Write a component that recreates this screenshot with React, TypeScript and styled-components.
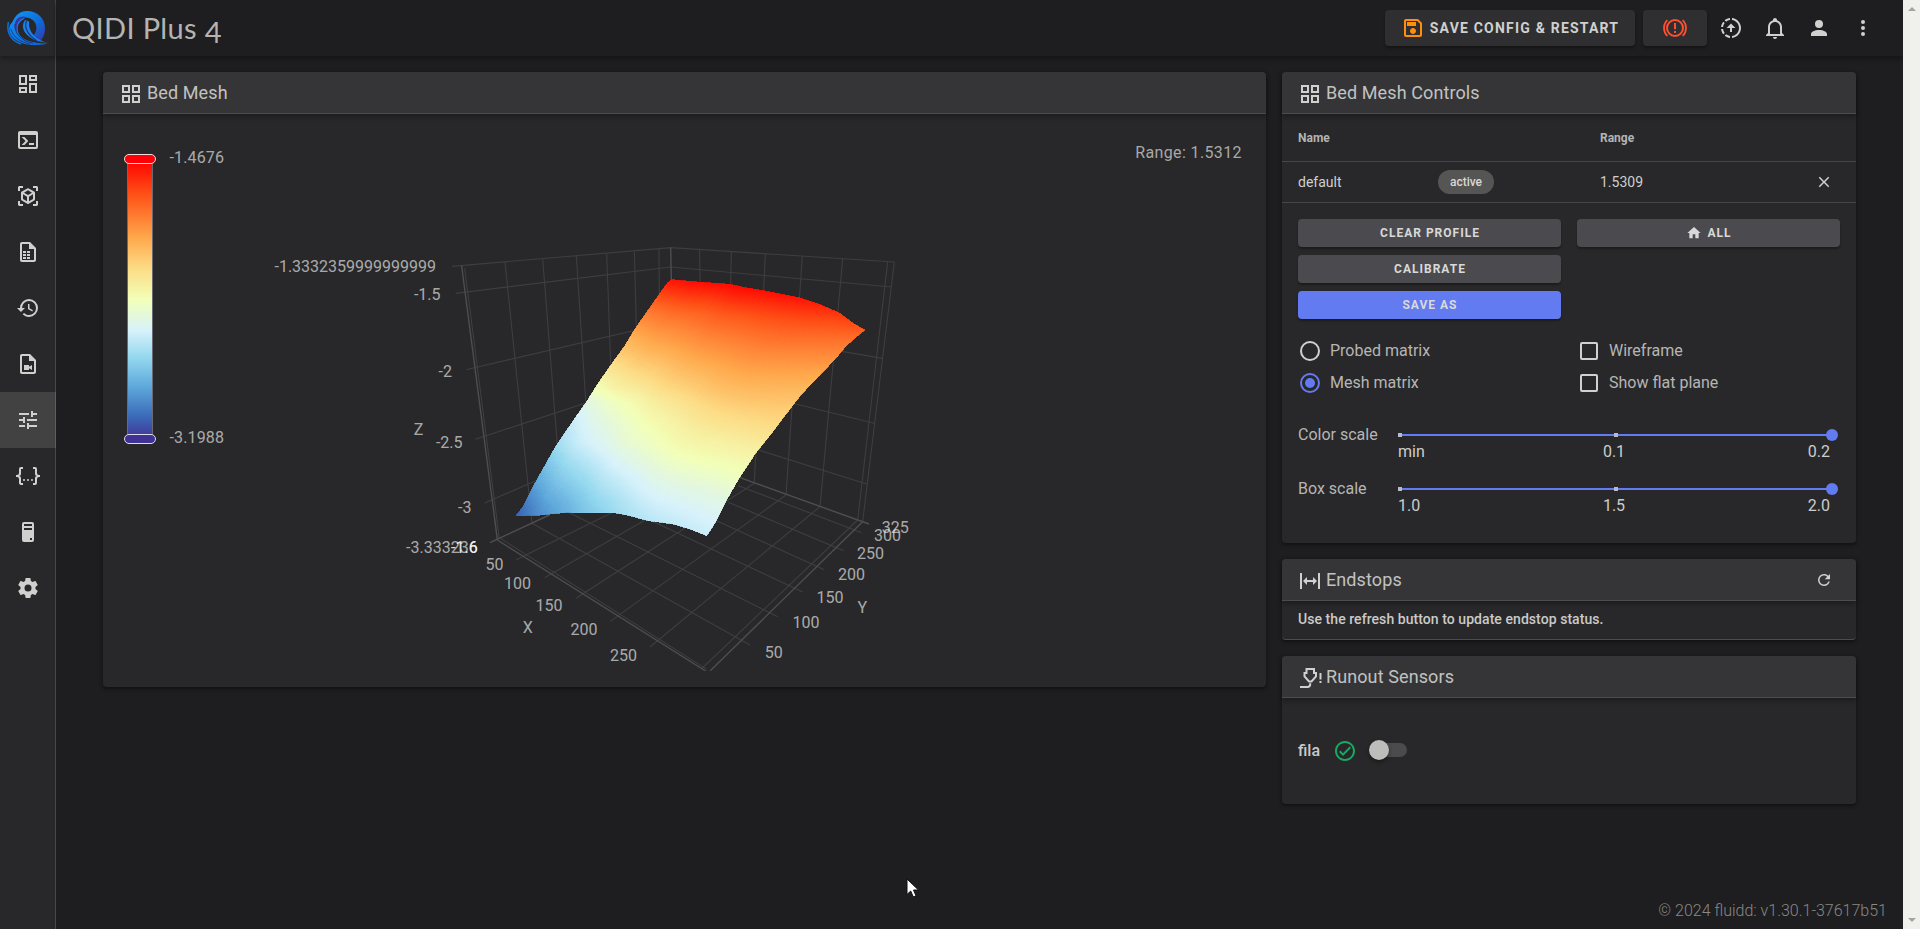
import React from "react";
import styled, { createGlobalStyle } from "styled-components";

const GlobalStyle = createGlobalStyle`
  * { box-sizing: border-box; }
  html, body { margin: 0; height: 100%; overflow: hidden; background: #1e1e20; }
  body { font-family: Roboto, "Liberation Sans", sans-serif; font-size: 16px; color: #c8c8c6; }
  button { font-family: inherit; border: 0; padding: 0; cursor: pointer; }
`;

/* ---------- icons ---------- */
const icons = {
  dashboard:
    "M19,5V7H15V5H19M9,5V11H5V5H9M19,13V19H15V13H19M9,17V19H5V17H9M21,3H13V9H21V3M11,3H3V13H11V3M21,11H13V21H21V11M11,15H3V21H11V15Z",
  console:
    "M20,19V7H4V19H20M20,3A2,2 0 0,1 22,5V19A2,2 0 0,1 20,21H4A2,2 0 0,1 2,19V5C2,3.89 2.9,3 4,3H20M13,17V15H18V17H13M9.58,13L5.57,9H8.4L11.7,12.3C12.09,12.69 12.09,13.33 11.7,13.72L8.42,17H5.59L9.58,13Z",
  cubeScan:
    "M17,22V20H20V17H22V20.5C22,20.89 21.84,21.24 21.54,21.54C21.24,21.84 20.89,22 20.5,22H17M7,22H3.5C3.11,22 2.76,21.84 2.46,21.54C2.16,21.24 2,20.89 2,20.5V17H4V20H7V22M17,2H20.5C20.89,2 21.24,2.16 21.54,2.46C21.84,2.76 22,3.11 22,3.5V7H20V4H17V2M7,2V4H4V7H2V3.5C2,3.11 2.16,2.76 2.46,2.46C2.76,2.16 3.11,2 3.5,2H7M13,17.25L17,14.95V10.36L13,12.66V17.25M12,10.92L16,8.63L12,6.28L8,8.63L12,10.92M7,14.95L11,17.25V12.66L7,10.36V14.95M18.23,7.59C18.73,7.91 19,8.34 19,8.91V15.23C19,15.8 18.73,16.23 18.23,16.55L12.75,19.73C12.25,20.05 11.75,20.05 11.25,19.73L5.77,16.55C5.27,16.23 5,15.8 5,15.23V8.91C5,8.34 5.27,7.91 5.77,7.59L11.25,4.41C11.5,4.28 11.75,4.22 12,4.22C12.25,4.22 12.5,4.28 12.75,4.41L18.23,7.59Z",
  fileTable:
    "M14 2H6C4.89 2 4 2.9 4 4V20C4 21.11 4.89 22 6 22H18C19.11 22 20 21.11 20 20V8L14 2M18 20H6V4H13V9H18V20M7 11H10V13H7V11M11 11H14V13H11V11M7 14H10V16H7V14M11 14H14V16H11V14M7 17H10V19H7V17M11 17H14V19H11V17Z",
  history:
    "M13.5,8H12V13L16.28,15.54L17,14.33L13.5,12.25V8M13,3A9,9 0 0,0 4,12H1L4.96,16.03L9,12H6A7,7 0 0,1 13,5A7,7 0 0,1 20,12A7,7 0 0,1 13,19C11.07,19 9.32,18.21 8.06,16.94L6.64,18.36C8.27,20 10.5,21 13,21A9,9 0 0,0 22,12A9,9 0 0,0 13,3",
  fileVideo:
    "M14 2H6C4.89 2 4 2.9 4 4V20C4 21.11 4.89 22 6 22H18C19.11 22 20 21.11 20 20V8L14 2M18 20H6V4H13V9H18V20M8 13H13V14.7L16 13V18L13 16.3V18H8V13Z",
  tune:
    "M3,17V19H9V17H3M3,5V7H13V5H3M13,21V19H21V17H13V15H11V21H13M7,9V11H3V13H7V15H9V9H7M21,13V11H11V13H21M15,9H17V7H21V5H17V3H15V9Z",
  json:
    "M5,3H7V5H5V10A2,2 0 0,1 3,12A2,2 0 0,1 5,14V19H7V21H5C3.93,20.73 3,20.1 3,19V15A2,2 0 0,0 1,13H0V11H1A2,2 0 0,0 3,9V5A2,2 0 0,1 5,3M19,3A2,2 0 0,1 21,5V9A2,2 0 0,0 23,11H24V13H23A2,2 0 0,0 21,15V19A2,2 0 0,1 19,21H17V19H19V14A2,2 0 0,1 21,12A2,2 0 0,1 19,10V5H17V3H19M12,15A1,1 0 0,1 13,16A1,1 0 0,1 12,17A1,1 0 0,1 11,16A1,1 0 0,1 12,15M8,15A1,1 0 0,1 9,16A1,1 0 0,1 8,17A1,1 0 0,1 7,16A1,1 0 0,1 8,15M16,15A1,1 0 0,1 17,16A1,1 0 0,1 16,17A1,1 0 0,1 15,16A1,1 0 0,1 16,15Z",
  tower:
    "M8,2H16A2,2 0 0,1 18,4V20A2,2 0 0,1 16,22H8A2,2 0 0,1 6,20V4A2,2 0 0,1 8,2M8,4V6H16V4H8M16,8H8V10H16V8M16,18H14V20H16V18Z",
  cog:
    "M12,15.5A3.5,3.5 0 0,1 8.5,12A3.5,3.5 0 0,1 12,8.5A3.5,3.5 0 0,1 15.5,12A3.5,3.5 0 0,1 12,15.5M19.43,12.97C19.47,12.65 19.5,12.33 19.5,12C19.5,11.67 19.47,11.34 19.43,11L21.54,9.37C21.73,9.22 21.78,8.95 21.66,8.73L19.66,5.27C19.54,5.05 19.27,4.96 19.05,5.05L16.56,6.05C16.04,5.66 15.5,5.32 14.87,5.07L14.5,2.42C14.46,2.18 14.25,2 14,2H10C9.75,2 9.54,2.18 9.5,2.42L9.13,5.07C8.5,5.32 7.96,5.66 7.44,6.05L4.95,5.05C4.73,4.96 4.46,5.05 4.34,5.27L2.34,8.73C2.21,8.95 2.27,9.22 2.46,9.37L4.57,11C4.53,11.34 4.5,11.67 4.5,12C4.5,12.33 4.53,12.65 4.57,12.97L2.46,14.63C2.27,14.78 2.21,15.05 2.34,15.27L4.34,18.73C4.46,18.95 4.73,19.03 4.95,18.95L7.44,17.94C7.96,18.34 8.5,18.68 9.13,18.93L9.5,21.58C9.54,21.82 9.75,22 10,22H14C14.25,22 14.46,21.82 14.5,21.58L14.87,18.93C15.5,18.67 16.04,18.34 16.56,17.94L19.05,18.95C19.27,19.03 19.54,18.95 19.66,18.73L21.66,15.27C21.78,15.05 21.73,14.78 21.54,14.63L19.43,12.97Z",
  grid:
    "M3 11H11V3H3M5 5H9V9H5M13 21H21V13H13M15 15H19V19H15M3 21H11V13H3M5 15H9V19H5M13 3V11H21V3M19 9H15V5H19Z",
  save:
    "M17 3H5C3.89 3 3 3.9 3 5V19C3 20.1 3.89 21 5 21H19C20.1 21 21 20.1 21 19V7L17 3M19 19H5V5H16.17L19 7.83V19M12 12C10.34 12 9 13.34 9 15S10.34 18 12 18 15 16.66 15 15 13.66 12 12 12M6 6H15V10H6V6Z",
  update:
    "M13,2.03V4.05C17.39,4.59 20.5,8.58 19.96,12.97C19.5,16.61 16.64,19.5 13,19.93V21.93C18.5,21.38 22.5,16.5 21.95,11C21.5,6.25 17.73,2.5 13,2.03M11,2.06C9.05,2.25 7.19,3 5.67,4.26L7.1,5.74C8.22,4.84 9.57,4.26 11,4.06V2.06M4.26,5.67C3,7.19 2.25,9.04 2.05,11H4.05C4.24,9.58 4.8,8.23 5.69,7.1L4.26,5.67M2.06,13C2.26,14.96 3.03,16.81 4.27,18.33L5.69,16.9C4.81,15.77 4.24,14.42 4.06,13H2.06M7.06,18.37L5.67,19.74C7.18,21 9.04,21.79 11,22V20C9.58,19.82 8.23,19.25 7.1,18.37H7.06M12 7.5L7.5 12H11V16H13V12H16.5L12 7.5Z",
  bell:
    "M10 21H14C14 22.1 13.1 23 12 23S10 22.1 10 21M21 19V20H3V19L5 17V11C5 7.9 7.03 5.17 10 4.29V4C10 2.9 10.9 2 12 2S14 2.9 14 4V4.29C16.97 5.17 19 7.9 19 11V17L21 19M17 11C17 8.24 14.76 6 12 6S7 8.24 7 11V18H17V11Z",
  account:
    "M12,4A4,4 0 0,1 16,8A4,4 0 0,1 12,12A4,4 0 0,1 8,8A4,4 0 0,1 12,4M12,14C16.42,14 20,15.79 20,18V20H4V18C4,15.79 7.58,14 12,14Z",
  dots:
    "M12,16A2,2 0 0,1 14,18A2,2 0 0,1 12,20A2,2 0 0,1 10,18A2,2 0 0,1 12,16M12,10A2,2 0 0,1 14,12A2,2 0 0,1 12,14A2,2 0 0,1 10,12A2,2 0 0,1 12,10M12,4A2,2 0 0,1 14,6A2,2 0 0,1 12,8A2,2 0 0,1 10,6A2,2 0 0,1 12,4Z",
  close:
    "M19,6.41L17.59,5L12,10.59L6.41,5L5,6.41L10.59,12L5,17.59L6.41,19L12,13.41L17.59,19L19,17.59L13.41,12L19,6.41Z",
  home: "M10,20V14H14V20H19V12H22L12,3L2,12H5V20H10Z",
  endstop:
    "M9,11H15V8L19,12L15,16V13H9V16L5,12L9,8V11M2,20V4H4V20H2M20,20V4H22V20H20Z",
  refresh:
    "M17.65,6.35C16.2,4.9 14.21,4 12,4A8,8 0 0,0 4,12A8,8 0 0,0 12,20C15.73,20 18.84,17.45 19.73,14H17.65C16.83,16.33 14.61,18 12,18A6,6 0 0,1 6,12A6,6 0 0,1 12,6C13.66,6 15.14,6.69 16.22,7.78L13,11H20V4L17.65,6.35Z",
  check:
    "M12 2C6.5 2 2 6.5 2 12S6.5 22 12 22 22 17.5 22 12 17.5 2 12 2M12 20C7.59 20 4 16.41 4 12S7.59 4 12 4 20 7.59 20 12 16.41 20 12 20M16.59 7.58L10 14.17L7.41 11.59L6 13L10 17L18 9L16.59 7.58Z",
};

type IconName = keyof typeof icons;

const Icon = ({ name, size = 24 }: { name: IconName; size?: number }) => (
  <svg width={size} height={size} viewBox="0 0 24 24" fill="currentColor" fillRule="evenodd">
    <path d={icons[name]} />
  </svg>
);

const EmergencyStopIcon = () => (
  <svg width="24" height="24" viewBox="0 0 24 24" fill="none" stroke="currentColor" strokeWidth="2">
    <circle cx="12" cy="12" r="8" />
    <path d="M12 7V13.200M12 15V17" />
    <path d="M4.300 4C-0.100 8.600 -0.100 15.400 4.300 20M19.700 4C24.100 8.600 24.100 15.400 19.700 20" strokeWidth="1.800" />
  </svg>
);

const NozzleIcon = () => (
  <svg width="24" height="24" viewBox="0 0 24 24" fill="none" stroke="currentColor" strokeWidth="2">
    <path d="M8.500 3H16V7H18V10.300L13.500 15.500H11L6.500 10.300V7H8.500Z" />
    <path d="M12.200 17.200V18C12.200 20 11.200 21 9.500 21H2" />
    <path d="M22.500 7V13.500M22.500 15V17" />
  </svg>
);

const Logo = () => (
  <svg width="42" height="36" viewBox="0 0 42 36" fill="none">
    <defs>
      <linearGradient id="ring" x1="0" y1="0" x2="1" y2="1">
        <stop offset="0" stopColor="#1597f5" />
        <stop offset="0.550" stopColor="#0a6fdc" />
        <stop offset="1" stopColor="#3636a8" />
      </linearGradient>
      <linearGradient id="wave" x1="0" y1="0" x2="1" y2="1">
        <stop offset="0" stopColor="#1a8cf0" />
        <stop offset="1" stopColor="#0a5fd0" />
      </linearGradient>
    </defs>
    <path
      d="M5 13C8 5 13 1 20 1C30 1 38 8 38 18C38 24 36 28 33.500 31C30 29.500 28 27.500 26.500 25.500C29.500 22 30.500 17 28 12.500C25 8 20 6.500 15 8C10 9.500 7 12 5 16Z"
      fill="url(#ring)"
    />
    <path d="M3 15C7 9 12 7 18 8.500C11 11 9 18 12 24C15.500 30 24 33 41 33.500C31 36 17 36 9 30C3 26 1 20 3 15Z" fill="url(#wave)" />
    <path d="M20 7.500C12 8 8.500 14 10 22C6.500 17 7 10.500 12 7.500C14.500 6 18 6 20 7.500Z" fill="#3d35a3" />
    <path d="M4 19C6 27 13 32 23 34" stroke="#1b3f86" strokeWidth="1" />
    <path d="M8 14C7 23 14 31 26 33" stroke="#153a80" strokeWidth="1" />
    <path d="M18 10C13 17 17 26 30 31L41 33C29 30 21 22 22 11.500Z" fill="#1683ea" />
    <path d="M19.500 11C17 17 20 24.500 30 31" stroke="#2c2d7c" strokeWidth="1.200" />
    <path d="M1.500 12C-1 22 4 31 14 34" stroke="#0a72dd" strokeWidth="1.500" />
  </svg>
);

/* ---------- shell ---------- */
const Shell = styled.div`
  display: grid;
  grid-template-columns: 56px 1fr 17px;
  height: 929px;
  background: #1e1e20;
`;

const Sidebar = styled.nav`
  display: flex;
  flex-direction: column;
  background: #28282a;
  border-right: 1px solid #48484a;
  color: #d0d0ce;
`;

const LogoBox = styled.div`
  height: 56px;
  padding: 10px 0 0 7px;
  box-shadow: 0 3px 5px rgba(0, 0, 0, 0.3);
`;

const NavItem = styled.a<{ $active?: boolean }>`
  display: flex;
  align-items: center;
  justify-content: center;
  width: 56px;
  height: 56px;
  background: ${(p) => (p.$active ? "rgba(255,255,255,0.12)" : "transparent")};
`;

const Page = styled.div`
  display: flex;
  flex-direction: column;
  min-width: 0;
`;

const TopBar = styled.header`
  display: flex;
  align-items: center;
  height: 56px;
  flex: none;
  padding: 0 18px 0 16px;
  box-shadow: 0 3px 5px rgba(0, 0, 0, 0.3);
  color: #d0d0ce;
`;

const PrinterName = styled.h1`
  flex: 1;
  margin: 0;
  font: 400 29px/56px Lato, sans-serif;
  letter-spacing: 0.350px;
  color: #b4b4b2;
`;

const LowDigit = styled.span`
  display: inline-block;
  transform: translateY(4px);
`;

const BarActions = styled.div`
  display: flex;
  gap: 8px;
  margin-right: 2px;
`;

const BarButton = styled.button<{ $width: number; $tone?: string }>`
  display: flex;
  align-items: center;
  justify-content: center;
  gap: 5px;
  width: ${(p) => p.$width}px;
  height: 36px;
  border-radius: 4px;
  background: #2f2f31;
  box-shadow: 0 2px 3px rgba(0, 0, 0, 0.35);
  color: ${(p) => p.$tone ?? "#d0d0ce"};
`;

const BarButtonText = styled.span`
  font-size: 14px;
  font-weight: 700;
  letter-spacing: 1.200px;
  color: #d0d0ce;
`;

const Tint = styled.span`
  display: flex;
  color: #ff8f0a;
`;

const BarIcon = styled.button`
  display: flex;
  align-items: center;
  justify-content: center;
  width: 44px;
  height: 44px;
  background: none;
  color: inherit;
`;

const Content = styled.main`
  display: grid;
  grid-template-columns: 1163px 574px;
  gap: 16px;
  align-items: start;
  flex: 1;
  padding: 16px 0 0 47px;
`;

const Column = styled.div`
  display: flex;
  flex-direction: column;
  gap: 16px;
`;

const Footer = styled.footer`
  height: 36px;
  padding-right: 16px;
  text-align: right;
  line-height: 36px;
  font-weight: 300;
  color: #888886;
`;

const ScrollTrack = styled.div`
  display: flex;
  flex-direction: column;
  justify-content: space-between;
  align-items: center;
  padding: 7px 0;
  background: #f0f0ec;
`;

const ScrollArrow = styled.i<{ $up?: boolean }>`
  border: 4px solid transparent;
  border-width: ${(p) => (p.$up ? "0 4px 4px" : "4px 4px 0")};
  border-bottom-color: ${(p) => (p.$up ? "#a3a3a3" : "transparent")};
  border-top-color: ${(p) => (p.$up ? "transparent" : "#a3a3a3")};
`;

/* ---------- cards ---------- */
const Card = styled.section<{ $height: number }>`
  height: ${(p) => p.$height}px;
  border-radius: 4px;
  background: #28282a;
  box-shadow: 0 2px 3px rgba(0, 0, 0, 0.3), 0 1px 5px rgba(0, 0, 0, 0.2);
`;

const CardHeader = styled.header`
  display: flex;
  align-items: center;
  height: 42px;
  padding: 0 20px 0 16px;
  border-bottom: 1px solid #4c4c4e;
  border-radius: 4px 4px 0 0;
  background: #353537;
  box-shadow: 0 3px 5px rgba(0, 0, 0, 0.3);
  color: #d0d0ce;

  > svg:first-child {
    margin-top: 3px;
  }
`;

const CardTitle = styled.h2`
  flex: 1;
  margin: 0 0 0 4px;
  font-size: 18px;
  font-weight: 400;
  line-height: 40px;
  letter-spacing: 0.100px;
  color: #c2c2c0;
`;

const HeaderAction = styled.button`
  display: flex;
  width: 24px;
  justify-content: center;
  background: none;
  color: inherit;
`;

const Panel = ({
  icon,
  title,
  height,
  action,
  children,
}: {
  icon: React.ReactNode;
  title: string;
  height: number;
  action?: React.ReactNode;
  children: React.ReactNode;
}) => (
  <Card $height={height}>
    <CardHeader>
      {icon}
      <CardTitle>{title}</CardTitle>
      {action}
    </CardHeader>
    {children}
  </Card>
);

/* ---------- bed mesh chart ---------- */
const ChartArea = styled.div`
  position: relative;
  height: 572px;

  svg {
    display: block;
  }
`;

const RangeNote = styled.span`
  position: absolute;
  top: 29px;
  right: 24px;
  line-height: 19px;
  letter-spacing: 0.380px;
  color: #a9a9a7;
`;

type Sample = [number, number, number];

const scale: [number, number[]][] = [
  [0, [64, 49, 150]],
  [0.09, [60, 111, 187]],
  [0.19, [95, 169, 220]],
  [0.29, [146, 215, 238]],
  [0.39, [216, 242, 251]],
  [0.5, [242, 255, 184]],
  [0.61, [252, 220, 134]],
  [0.72, [255, 168, 76]],
  [0.88, [255, 78, 22]],
  [1, [255, 0, 0]],
];

const colorAt = (t: number) => {
  const v = Math.min(1, Math.max(0, t));
  const i = Math.max(1, scale.findIndex(([s]) => s >= v));
  const [a, ca] = scale[i - 1];
  const [b, cb] = scale[i];
  const k = (v - a) / (b - a);
  return `rgb(${ca.map((c, n) => Math.round(c + (cb[n] - c) * k)).join(",")})`;
};

/* Mesh boundary: screen x, screen y, normalised height. */
const edgeLeft: Sample[] = [
  [228, 857, 0.07], [250, 830, 0.1], [285, 760, 0.18], [330, 680, 0.27], [350, 645, 0.31],
  [400, 572, 0.37], [440, 515, 0.43], [470, 467, 0.51], [515, 402, 0.6], [553, 350, 0.67],
  [583, 300, 0.73], [625, 240, 0.81], [660, 190, 0.9], [680, 161, 0.95], [694, 149, 0.97],
];
const edgeRight: Sample[] = [
  [800, 917, 0.37], [823, 882, 0.39], [858, 812, 0.43], [900, 740, 0.49], [945, 672, 0.54],
  [1000, 603, 0.6], [1055, 530, 0.65], [1085, 492, 0.675], [1130, 445, 0.71], [1180, 393, 0.755],
  [1220, 346, 0.8], [1250, 320, 0.83], [1275, 300, 0.86],
];
const edgeFront: Sample[] = [
  [228, 857, 0.07], [290, 856, 0.14], [380, 847, 0.21], [430, 849, 0.25], [530, 849, 0.31],
  [570, 857, 0.33], [620, 871, 0.345], [700, 882, 0.36], [750, 897, 0.365], [800, 917, 0.37],
];
const edgeBack: Sample[] = [
  [694, 149, 0.97], [770, 156, 0.98], [870, 163, 0.985], [920, 174, 0.985], [980, 184, 0.98],
  [1080, 204, 0.97], [1140, 224, 0.95], [1200, 250, 0.92], [1240, 281, 0.885], [1275, 300, 0.86],
];

const sampler = (pts: Sample[]) => {
  const len = [0];
  for (let i = 1; i < pts.length; i++)
    len.push(len[i - 1] + Math.hypot(pts[i][0] - pts[i - 1][0], pts[i][1] - pts[i - 1][1]));
  const total = len[len.length - 1];
  return (s: number): number[] => {
    const d = s * total;
    let i = 1;
    while (i < len.length - 1 && len[i] < d) i++;
    const k = (d - len[i - 1]) / (len[i] - len[i - 1]);
    return pts[i].map((b, n) => pts[i - 1][n] + (b - pts[i - 1][n]) * k);
  };
};

const left = sampler(edgeLeft);
const right = sampler(edgeRight);
const front = sampler(edgeFront);
const back = sampler(edgeBack);

const surface = (u: number, v: number) => {
  const [f, b, l, r] = [front(u), back(u), left(v), right(v)];
  return [0, 1, 2].map(
    (n) =>
      (1 - v) * f[n] + v * b[n] + (1 - u) * l[n] + u * r[n] -
      ((1 - u) * (1 - v) * edgeFront[0][n] + u * (1 - v) * edgeRight[0][n] +
        (1 - u) * v * edgeBack[0][n] + u * v * edgeBack[edgeBack.length - 1][n])
  );
};

const COLS = 56;
const ROWS = 110;

const facets = (() => {
  const list: { points: string; fill: string }[] = [];
  for (let j = ROWS - 1; j >= 0; j--)
    for (let i = 0; i < COLS; i++) {
      const corners = [[i, j], [i + 1, j], [i + 1, j + 1], [i, j + 1]].map(([a, b]) =>
        surface(a / COLS, b / ROWS)
      );
      const t = corners.reduce((sum, c) => sum + c[2], 0) / 4;
      list.push({
        points: corners.map((c) => `${c[0].toFixed(1)},${c[1].toFixed(1)}`).join(" "),
        fill: colorAt(t),
      });
    }
  return list;
})();

const gridLines = [
  // left wall
  "M36 109L692 53", "M47 190L692 111", "M78 419L692 276", "M106 628L700 432", "M134 819L705 569",
  "M195 97L276 880", "M308 86L367 838", "M409 79L456 800", "M500 70L525 760", "M583 63L600 700", "M657 57L660 600",
  // right wall
  "M692 53L1363 96", "M692 111L1356 171", "M692 276L1328 385", "M700 432L1303 580", "M705 581L1280 762",
  "M779 60L785 650", "M874 66L860 700", "M976 72L943 760", "M1087 79L1038 795", "M1208 87L1140 830",
  "M1343 95L1253 870", "M1363 96L1268 875",
  // floor
  "M276 880L930 1245", "M367 838L1013 1160", "M600 856L1088 1086", "M780 850L1153 1019", "M865 817L1211 962",
  "M895 767L1265 908", "M229 989L520 846", "M314 1043L630 862", "M408 1105L943 760", "M511 1174L1038 795",
  "M630 1251L1140 830", "M784 1317L1253 870",
];

const axisLines = ["M65 108L172 928", "M172 930L797 1323", "M810 1323L1268 875", "M150 938L328 855", "M900 743L1287 882", "M692 53L694 150"];

const axisLabels: [number, number, string, ("start" | "end")?][] = [
  [436, 271.700, "-1.3332359999999999", "end"],
  [440.500, 299.500, "-1.5", "end"],
  [452, 377.200, "-2", "end"],
  [462.500, 448.300, "-2.5", "end"],
  [471.500, 512.500, "-3", "end"],
  [477.700, 552.800, "-3.333236", "end"],
  [477.700, 552.800, "-1.6", "end"],
  [477.700, 552.800, "-1.6", "end"],
  [413.700, 435.300, "Z"],
  [485.500, 570.200, "50"],
  [504, 589.200, "100"],
  [535.600, 610.600, "150"],
  [570.500, 634.500, "200"],
  [610, 661, "250"],
  [522.800, 632.700, "X"],
  [857.400, 612.700, "Y"],
  [764.700, 657.700, "50"],
  [792.400, 628.200, "100"],
  [816.400, 602.500, "150"],
  [838, 579.500, "200"],
  [857, 559.200, "250"],
  [874, 541, "300"],
  [881.700, 532.800, "325"],
];

const MeshChart = () => (
  <svg width="1163" height="572" viewBox="103 114 1163 572">
    <defs>
      <linearGradient id="legend" x1="0" y1="1" x2="0" y2="0">
        {scale.map(([s]) => (
          <stop key={s} offset={s} stopColor={colorAt(s)} />
        ))}
      </linearGradient>
      <clipPath id="plot">
        <rect x="103" y="114" width="1163" height="557" />
      </clipPath>
    </defs>
    <g clipPath="url(#plot)">
      <g transform="translate(440 230) scale(0.333333)" fill="none">
        <path d={gridLines.join("")} stroke="#3e3e40" strokeWidth="3.300" />
        <path d="M74 115L178 926M180 924L800 1318" stroke="#404042" strokeWidth="3" />
        <path d={axisLines.join("")} stroke="#4e4e50" strokeWidth="4.200" />
        <g shapeRendering="crispEdges">
          {facets.map((f, i) => (
            <polygon key={i} points={f.points} fill={f.fill} stroke={f.fill} strokeWidth="2.500" />
          ))}
        </g>
      </g>
    </g>
    <g fontSize="16" fill="#ffffff" fillOpacity="0.620">
      {axisLabels.map(([x, y, text, anchor = "start"], i) => (
        <text key={i} x={x} y={y} textAnchor={anchor}>
          {text}
        </text>
      ))}
      <text x="169.500" y="163" letterSpacing="0.150">
        -1.4676
      </text>
      <text x="169.500" y="443" letterSpacing="0.150">
        -3.1988
      </text>
    </g>
    <rect x="127.500" y="159.500" width="25" height="280" fill="url(#legend)" stroke="#6a6a72" strokeWidth="1" />
    <rect x="124.500" y="154.500" width="31" height="9" rx="4.500" fill="#fb0007" stroke="#f0dede" />
    <rect x="124.500" y="434.500" width="31" height="9" rx="4.500" fill="#403196" stroke="#dedee8" />
  </svg>
);

/* ---------- controls ---------- */
const TableRow = styled.div<{ $height: number; $head?: boolean }>`
  display: grid;
  grid-template-columns: 140px 162px 1fr 24px;
  align-items: center;
  height: ${(p) => p.$height}px;
  padding: 0 20px 0 16px;
  border-bottom: 1px solid #464648;
  font-size: ${(p) => (p.$head ? 12 : 14)}px;
  font-weight: ${(p) => (p.$head ? 700 : 400)};
  color: ${(p) => (p.$head ? "#b4b4b2" : "#cfcfcd")};
`;

const Chip = styled.span`
  justify-self: start;
  width: 56px;
  height: 24px;
  border-radius: 12px;
  background: #555553;
  font-size: 12px;
  font-weight: 500;
  line-height: 24px;
  text-align: center;
  color: #d8d8d6;
`;

const ButtonGrid = styled.div`
  display: grid;
  grid-template-columns: 263px 263px;
  gap: 8px 16px;
  padding: 16px 16px 0;
`;

const ActionButton = styled.button<{ $primary?: boolean }>`
  display: flex;
  align-items: center;
  justify-content: center;
  gap: 5px;
  grid-column: ${(p) => (p.$primary ? 1 : "auto")};
  height: 28px;
  padding-left: 1px;
  border-radius: 4px;
  background: ${(p) => (p.$primary ? "#637bf0" : "#4b4b4f")};
  box-shadow: 0 2px 2px rgba(0, 0, 0, 0.3);
  font-size: 12px;
  font-weight: 700;
  letter-spacing: 1px;
  color: #d9d9d9;
`;

const OptionGrid = styled.div`
  display: grid;
  grid-template-columns: 279px 1fr;
  row-gap: 8px;
  padding: 19px 18px 0;
`;

const Option = styled.label`
  display: flex;
  align-items: center;
  gap: 10px;
  height: 24px;
  color: #b6b6b4;
`;

const Radio = styled.i<{ $on?: boolean }>`
  display: grid;
  place-items: center;
  width: 20px;
  height: 20px;
  margin-top: 1px;
  border: 2px solid ${(p) => (p.$on ? "#637bf0" : "#d0d0ce")};
  border-radius: 50%;

  &::after {
    content: "";
    width: 10px;
    height: 10px;
    border-radius: 50%;
    background: ${(p) => (p.$on ? "#637bf0" : "transparent")};
  }
`;

const Checkbox = styled.i`
  width: 18px;
  height: 18px;
  margin: 1px 1px 0 1px;
  border: 2px solid #d0d0ce;
  border-radius: 2px;
`;

const SliderRow = styled.div<{ $gap: number }>`
  display: grid;
  grid-template-columns: 102px 432px;
  padding: 0 16px;
  margin-top: ${(p) => p.$gap}px;
  color: #b6b6b4;
`;

const SliderLabel = styled.span`
  padding-top: 1px;
  line-height: 20px;
`;

const Track = styled.div`
  display: flex;
  align-items: center;
  justify-content: space-between;
  height: 2px;
  margin-top: 10px;
  background: #637bf0;
`;

const Tick = styled.i`
  width: 4px;
  height: 4px;
  margin-left: -2px;
  background: #b9bcc8;

  & + & {
    margin-left: 4px;
  }
`;

const Thumb = styled.i`
  width: 12px;
  height: 12px;
  margin-right: -6px;
  border-radius: 50%;
  background: #637bf0;
`;

const TickLabels = styled.div`
  display: grid;
  grid-template-columns: 1fr auto 1fr;
  margin: 6px 2px 0 -2px;
  line-height: 20px;
  color: #cdcdcb;

  span:last-child {
    text-align: right;
  }
`;

const Slider = ({ label, ticks, gap }: { label: string; ticks: string[]; gap: number }) => (
  <SliderRow $gap={gap}>
    <SliderLabel>{label}</SliderLabel>
    <div>
      <Track>
        <Tick />
        <Tick />
        <Thumb />
      </Track>
      <TickLabels>
        {ticks.map((t) => (
          <span key={t}>{t}</span>
        ))}
      </TickLabels>
    </div>
  </SliderRow>
);

const EndstopNote = styled.p`
  height: 39px;
  margin: 0;
  padding: 0 16px;
  border-bottom: 1px solid #4c4c4e;
  border-radius: 0 0 4px 4px;
  font-size: 14px;
  font-weight: 500;
  line-height: 36px;
  letter-spacing: 0.060px;
  color: #cacac8;
`;

const SensorRow = styled.div`
  display: flex;
  align-items: center;
  height: 104px;
  padding: 0 16px;
  font-weight: 500;
  color: #cacac8;
`;

const SensorState = styled.span`
  display: flex;
  margin: 1px 0 0 13px;
  color: #18a860;
`;

const Switch = styled.span`
  display: flex;
  align-items: center;
  width: 36px;
  height: 14px;
  margin-left: 14px;
  border-radius: 7px;
  background: #4b4b4d;

  &::before {
    content: "";
    width: 20px;
    height: 20px;
    margin-left: -2px;
    border-radius: 50%;
    background: #bdbdbb;
    box-shadow: 0 2px 4px rgba(0, 0, 0, 0.4);
  }
`;

const Pointer = styled.svg`
  position: absolute;
  left: 906px;
  top: 878px;
`;

const navigation: IconName[] = [
  "dashboard", "console", "cubeScan", "fileTable", "history", "fileVideo", "tune", "json", "tower", "cog",
];

export default function App() {
  return (
    <>
      <GlobalStyle />
      <Shell>
        <Sidebar>
          <LogoBox>
            <Logo />
          </LogoBox>
          {navigation.map((name) => (
            <NavItem key={name} $active={name === "tune"}>
              <Icon name={name} />
            </NavItem>
          ))}
        </Sidebar>
        <Page>
          <TopBar>
            <PrinterName>
              QIDI Plus <LowDigit>4</LowDigit>
            </PrinterName>
            <BarActions>
              <BarButton $width={250}>
                <Tint>
                  <Icon name="save" />
                </Tint>
                <BarButtonText>SAVE CONFIG &amp; RESTART</BarButtonText>
              </BarButton>
              <BarButton $width={64} $tone="#ff4f2e">
                <EmergencyStopIcon />
              </BarButton>
            </BarActions>
            {(["update", "bell", "account", "dots"] as IconName[]).map((name) => (
              <BarIcon key={name}>
                <Icon name={name} />
              </BarIcon>
            ))}
          </TopBar>
          <Content>
            <Panel icon={<Icon name="grid" />} title="Bed Mesh" height={615}>
              <ChartArea>
                <MeshChart />
                <RangeNote>Range: 1.5312</RangeNote>
              </ChartArea>
            </Panel>
            <Column>
              <Panel icon={<Icon name="grid" />} title="Bed Mesh Controls" height={471}>
                <TableRow $height={48} $head>
                  <span>Name</span>
                  <span />
                  <span>Range</span>
                </TableRow>
                <TableRow $height={41}>
                  <span>default</span>
                  <Chip>active</Chip>
                  <span>1.5309</span>
                  <HeaderAction>
                    <Icon name="close" size={18} />
                  </HeaderAction>
                </TableRow>
                <ButtonGrid>
                  <ActionButton>CLEAR PROFILE</ActionButton>
                  <ActionButton>
                    <Icon name="home" size={16} />
                    ALL
                  </ActionButton>
                  <ActionButton>CALIBRATE</ActionButton>
                  <ActionButton $primary>SAVE AS</ActionButton>
                </ButtonGrid>
                <OptionGrid>
                  <Option>
                    <Radio />
                    Probed matrix
                  </Option>
                  <Option>
                    <Checkbox />
                    Wireframe
                  </Option>
                  <Option>
                    <Radio $on />
                    Mesh matrix
                  </Option>
                  <Option>
                    <Checkbox />
                    Show flat plane
                  </Option>
                </OptionGrid>
                <Slider label="Color scale" ticks={["min", "0.1", "0.2"]} gap={30} />
                <Slider label="Box scale" ticks={["1.0", "1.5", "2.0"]} gap={16} />
              </Panel>
              <Panel
                icon={<Icon name="endstop" />}
                title="Endstops"
                height={81}
                action={
                  <HeaderAction>
                    <Icon name="refresh" size={18} />
                  </HeaderAction>
                }
              >
                <EndstopNote>Use the refresh button to update endstop status.</EndstopNote>
              </Panel>
              <Panel icon={<NozzleIcon />} title="Runout Sensors" height={148}>
                <SensorRow>
                  fila
                  <SensorState>
                    <Icon name="check" />
                  </SensorState>
                  <Switch />
                </SensorRow>
              </Panel>
            </Column>
          </Content>
          <Footer>© 2024 fluidd: v1.30.1-37617b51</Footer>
        </Page>
        <ScrollTrack>
          <ScrollArrow $up />
          <ScrollArrow />
        </ScrollTrack>
      </Shell>
      <Pointer width="14" height="21" viewBox="0 0 14 21">
        <path d="M1 1V16.500L4.700 13L7.300 19L10 17.800L7.500 12H12.500Z" fill="#fff" stroke="#101014" />
      </Pointer>
    </>
  );
}
